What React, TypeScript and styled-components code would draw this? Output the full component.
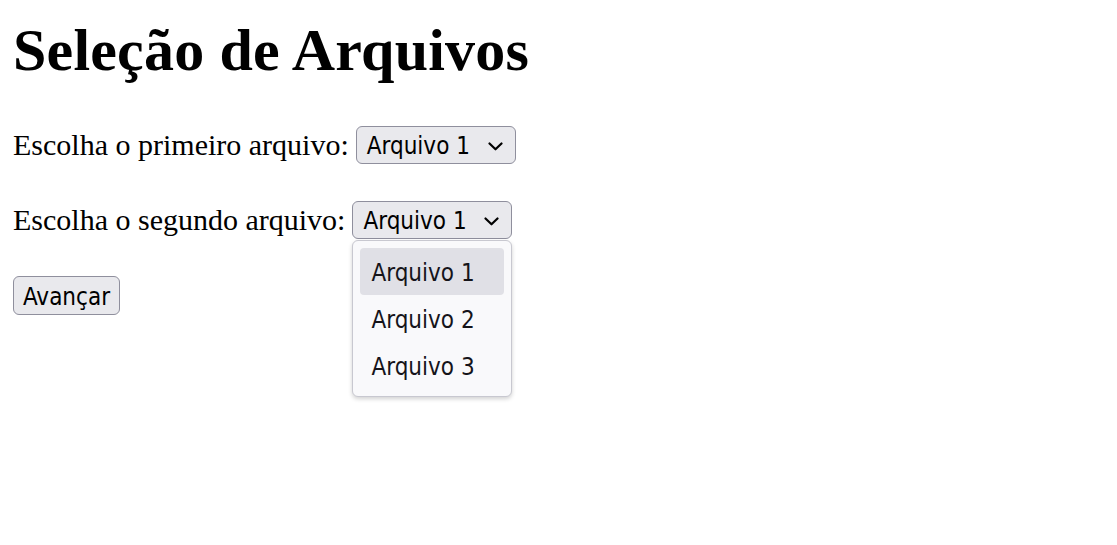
import React from "react"
import styled, { createGlobalStyle } from "styled-components"

const GlobalStyle = createGlobalStyle`
	html, body, #root {
		min-height: 100%;
		height: 100%;
		background: #fff;
	}
	body {
		margin: 0;
		font-family: "Liberation Serif", "Times New Roman", serif;
		font-size: 30px;
		color: #000;
	}
	#root {
		box-sizing: border-box;
		padding: 16px 12px 12px 12px;
	}
`

const Title = styled("h1")`
	margin: 0;
	padding-left: 1px;
	font-size: 60px;
	font-weight: bold;
	line-height: 69px;
	letter-spacing: 0.2px;
`

const Form = styled("div")`
	display: flex;
	flex-direction: column;
	align-items: flex-start;
	gap: 37px;
	margin-top: 41px;
`

const Row = styled("div")`
	display: flex;
	align-items: center;
	gap: 7px;
	height: 38px;
`

const Label = styled("span")`
	padding-left: 1px;
	line-height: 34px;
	white-space: nowrap;
`

const control = `
	font-family: "DejaVu Sans Condensed", "DejaVu Sans", sans-serif;
	font-stretch: condensed;
	font-size: 24px;
	color: #000;
	background: #e9e9ed;
	border: 1px solid #8f8f9d;
	border-radius: 6px;
	box-sizing: border-box;
`

const SelectWrap = styled("div")`
	position: relative;
`

const SelectBox = styled("div")`
	${control}
	display: flex;
	align-items: center;
	justify-content: space-between;
	width: 160px;
	height: 38px;
	padding: 2px 12px 0 10px;
`

const Chevron = styled("svg")`
	width: 15px;
	height: 9px;
	flex-shrink: 0;
`

const Menu = styled("div")`
	position: absolute;
	left: 0;
	top: calc(100% + 1px);
	width: 160px;
	box-sizing: border-box;
	padding: 7px;
	background: #f9f9fb;
	border: 1px solid #c8c8d0;
	border-radius: 6px;
	box-shadow: 0 2px 4px rgba(0, 0, 0, 0.18);
	z-index: 10;
`

const Option = styled("div")<{ $active?: boolean }>`
	font-family: "DejaVu Sans Condensed", "DejaVu Sans", sans-serif;
	font-stretch: condensed;
	font-size: 24px;
	color: #15141a;
	height: 47px;
	display: flex;
	align-items: center;
	padding: 2px 11px 0;
	box-sizing: border-box;
	border-radius: 4px;
	background: ${p => (p.$active ? "#e0e0e6" : "transparent")};
`

const Button = styled("button")`
	${control}
	height: 39px;
	margin-left: 1px;
	padding: 2px 9px 0;
	cursor: pointer;
`

function Select({ value, open, options }: { value: string; open?: boolean; options: string[] }) {
	return (
		<SelectWrap>
			<SelectBox>
				<span>{value}</span>
				<Chevron viewBox="0 0 15 9">
					<path d="M1.5 1.5 L7.5 7.3 L13.5 1.5" fill="none" stroke="#000" strokeWidth="2.2" strokeLinecap="round" strokeLinejoin="round" />
				</Chevron>
			</SelectBox>
			{open && (
				<Menu>
					{options.map(o => (
						<Option key={o} $active={o === value}>
							{o}
						</Option>
					))}
				</Menu>
			)}
		</SelectWrap>
	)
}

export default function App() {
	const files = ["Arquivo 1", "Arquivo 2", "Arquivo 3"]
	return (
		<>
			<GlobalStyle />
			<Title>Seleção de Arquivos</Title>
			<Form>
				<Row>
					<Label>Escolha o primeiro arquivo:</Label>
					<Select value="Arquivo 1" options={files} />
				</Row>
				<Row>
					<Label>Escolha o segundo arquivo:</Label>
					<Select value="Arquivo 1" options={files} open />
				</Row>
				<Button>Avançar</Button>
			</Form>
		</>
	)
}
